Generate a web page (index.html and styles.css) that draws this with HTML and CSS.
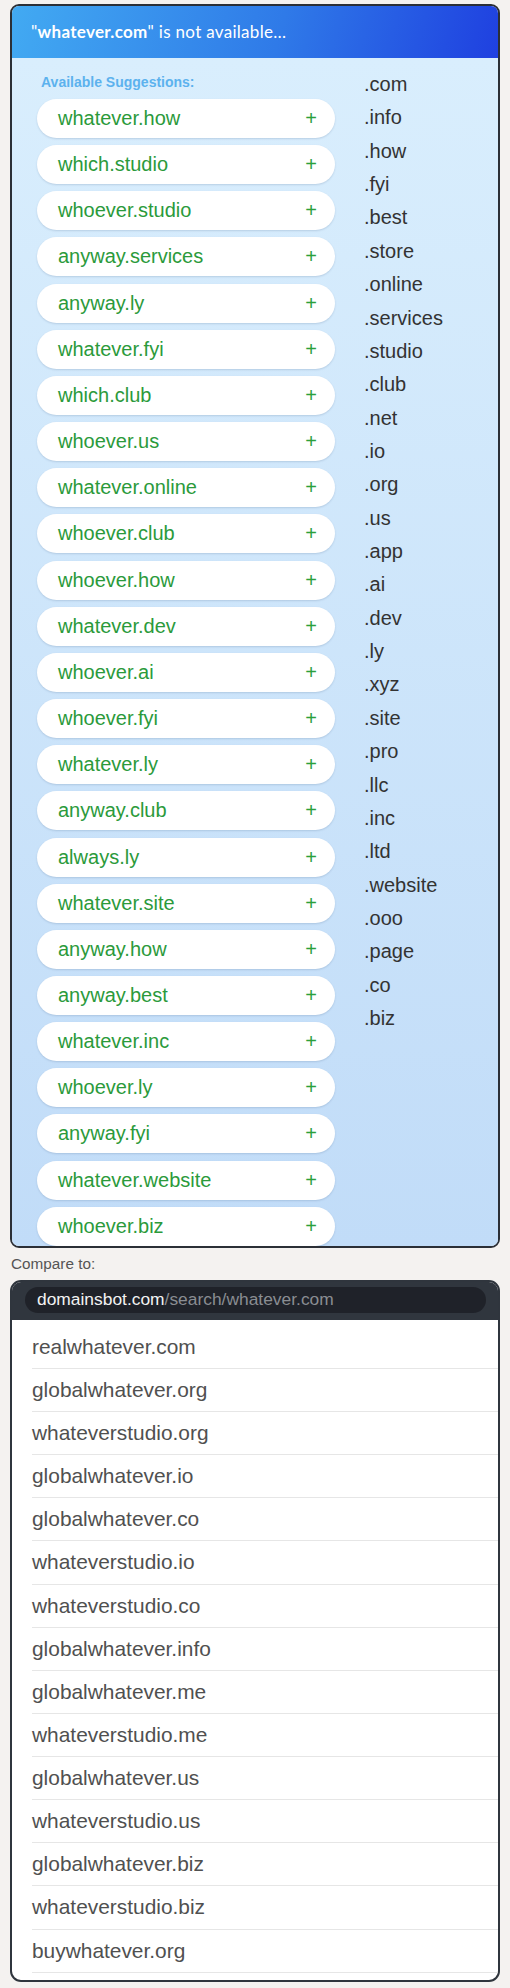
FILE: index.html
```html
<!DOCTYPE html>
<html>
<head>
<meta charset="utf-8">
<link rel="stylesheet" href="styles.css">
</head>
<body>
<div class="card">
  <div class="card-head"><span class="title">"<b>whatever.com</b>" is not available…</span></div>
  <div class="card-body">
    <div class="suggest">
      <div class="label">Available Suggestions:</div>
      <div class="pill"><span>whatever.how</span><span class="plus">+</span></div>
      <div class="pill"><span>which.studio</span><span class="plus">+</span></div>
      <div class="pill"><span>whoever.studio</span><span class="plus">+</span></div>
      <div class="pill"><span>anyway.services</span><span class="plus">+</span></div>
      <div class="pill"><span>anyway.ly</span><span class="plus">+</span></div>
      <div class="pill"><span>whatever.fyi</span><span class="plus">+</span></div>
      <div class="pill"><span>which.club</span><span class="plus">+</span></div>
      <div class="pill"><span>whoever.us</span><span class="plus">+</span></div>
      <div class="pill"><span>whatever.online</span><span class="plus">+</span></div>
      <div class="pill"><span>whoever.club</span><span class="plus">+</span></div>
      <div class="pill"><span>whoever.how</span><span class="plus">+</span></div>
      <div class="pill"><span>whatever.dev</span><span class="plus">+</span></div>
      <div class="pill"><span>whoever.ai</span><span class="plus">+</span></div>
      <div class="pill"><span>whoever.fyi</span><span class="plus">+</span></div>
      <div class="pill"><span>whatever.ly</span><span class="plus">+</span></div>
      <div class="pill"><span>anyway.club</span><span class="plus">+</span></div>
      <div class="pill"><span>always.ly</span><span class="plus">+</span></div>
      <div class="pill"><span>whatever.site</span><span class="plus">+</span></div>
      <div class="pill"><span>anyway.how</span><span class="plus">+</span></div>
      <div class="pill"><span>anyway.best</span><span class="plus">+</span></div>
      <div class="pill"><span>whatever.inc</span><span class="plus">+</span></div>
      <div class="pill"><span>whoever.ly</span><span class="plus">+</span></div>
      <div class="pill"><span>anyway.fyi</span><span class="plus">+</span></div>
      <div class="pill"><span>whatever.website</span><span class="plus">+</span></div>
      <div class="pill"><span>whoever.biz</span><span class="plus">+</span></div>
    </div>
    <ul class="tlds">
      <li>.com</li><li>.info</li><li>.how</li><li>.fyi</li><li>.best</li><li>.store</li><li>.online</li><li>.services</li><li>.studio</li><li>.club</li><li>.net</li><li>.io</li><li>.org</li><li>.us</li><li>.app</li><li>.ai</li><li>.dev</li><li>.ly</li><li>.xyz</li><li>.site</li><li>.pro</li><li>.llc</li><li>.inc</li><li>.ltd</li><li>.website</li><li>.ooo</li><li>.page</li><li>.co</li><li>.biz</li>
    </ul>
  </div>
</div>
<div class="compare-label">Compare to:</div>
<div class="browser">
  <div class="browser-head">
    <div class="urlbar"><span class="host">domainsbot.com</span><span class="path">/search/whatever.com</span></div>
  </div>
  <ul class="results">
    <li>realwhatever.com</li>
    <li>globalwhatever.org</li>
    <li>whateverstudio.org</li>
    <li>globalwhatever.io</li>
    <li>globalwhatever.co</li>
    <li>whateverstudio.io</li>
    <li>whateverstudio.co</li>
    <li>globalwhatever.info</li>
    <li>globalwhatever.me</li>
    <li>whateverstudio.me</li>
    <li>globalwhatever.us</li>
    <li>whateverstudio.us</li>
    <li>globalwhatever.biz</li>
    <li>whateverstudio.biz</li>
    <li>buywhatever.org</li>
  </ul>
</div>
</body>
</html>
```
FILE: styles.css
```css
* { box-sizing: border-box; }
html, body { margin: 0; }
body {
  background: #f4f2f0;
  padding: 4px 10px 0 10px;
  font-family: "Liberation Sans", Arial, sans-serif;
  width: 510px;
}
.card {
  border: 2px solid #2b2f36;
  border-radius: 9px;
  overflow: hidden;
  background: #fff;
}
.card-head {
  height: 52px;
  background: linear-gradient(105deg, #42aaf2 0%, #2f7ae8 55%, #1f40e0 100%);
  color: #fff;
  font-family: Lato, "Liberation Sans", sans-serif;
  font-size: 17px;
  letter-spacing: 0.3px;
  display: flex;
  align-items: center;
  padding-left: 19px;
  padding-bottom: 2px;
}
.card-head b { font-weight: 700; }
.card-body {
  display: flex;
  background: linear-gradient(180deg, #d9eefd 0%, #c1dcf8 100%);
  padding-left: 25px;
}
.suggest {
  width: 298px;
  padding-top: 14px;
}
.label {
  font-size: 14px;
  font-weight: 700;
  color: #5cb2ee;
  line-height: 20px;
  padding-left: 4px;
  margin-bottom: 7px;
}
.pill {
  height: 39px;
  margin-bottom: 7.17px;
  background: #fff;
  border-radius: 20px;
  box-shadow: 0 1px 2px rgba(60, 90, 130, 0.2);
  display: flex;
  align-items: center;
  justify-content: space-between;
  padding: 0 18px 0 21px;
  color: #2b9a3b;
  font-size: 20px;
}
.pill:last-child { margin-bottom: 0; }
.plus {
  font-size: 20px;
  color: #2ca03c;
}
.tlds {
  list-style: none;
  margin: 0;
  padding: 10px 0 0 29px;
  color: #333;
  font-size: 20px;
}
.tlds li {
  line-height: 33.36px;
  height: 33.36px;
}
.compare-label {
  height: 32px;
  line-height: 32px;
  font-size: 15.3px;
  color: #555;
  padding-left: 1px;
}
.browser {
  border: 2px solid #2f353d;
  border-radius: 11px;
  overflow: hidden;
  background: #fff;
}
.browser-head {
  background: #30363e;
  padding: 5px 12px 7px 13px;
}
.urlbar {
  height: 26px;
  border-radius: 13px;
  background: #1f2229;
  display: flex;
  align-items: center;
  padding-left: 12px;
  font-size: 17.4px;
}
.host { color: #f2f2f2; }
.path { color: #8a8d92; }
.results {
  list-style: none;
  margin: 0;
  padding: 6px 0 7px 0;
}
.results li {
  margin-left: 20px;
  height: 43.14px;
  line-height: 42px;
  border-bottom: 1px solid #e6e6e6;
  font-size: 20.9px;
  color: #505050;
}
```
